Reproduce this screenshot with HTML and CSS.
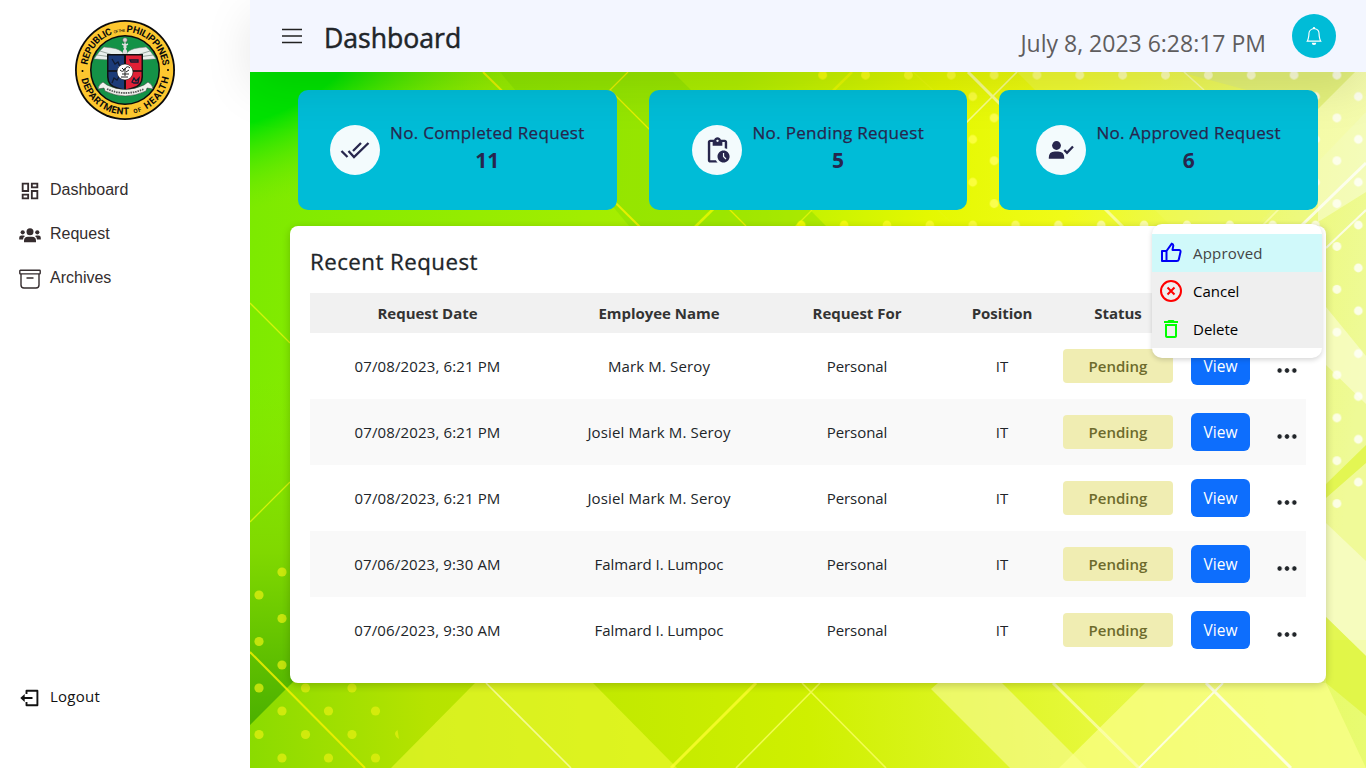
FILE: index.html
```html
<!DOCTYPE html>
<html lang="en">
<head>
<meta charset="utf-8">
<title>Dashboard</title>
<link rel="stylesheet" href="styles.css">
</head>
<body>
<div class="app">
  <aside class="sidebar">
    <svg class="seal" viewBox="0 0 100 100">
      <defs>
        <path id="arcTop" d="M12 50a38 38 0 0 1 76 0"/>
        <path id="arcBottom" d="M5.500 50a44.500 44.500 0 0 0 89 0"/>
      </defs>
      <circle cx="50" cy="50" r="50" fill="#0a0a0a"/>
      <circle cx="50" cy="50" r="48.2" fill="#fdc72f"/>
      <circle cx="50" cy="50" r="35" fill="#0a0a0a"/>
      <circle cx="50" cy="50" r="33.5" fill="#149247"/>
      <g class="seal-text">
        <text><textPath href="#arcTop" startOffset="5" textLength="42">REPUBLIC</textPath></text>
        <text class="seal-small"><textPath href="#arcTop" startOffset="48.5" textLength="11">OF THE</textPath></text>
        <text><textPath href="#arcTop" startOffset="61" textLength="54">PHILIPPINES</textPath></text>
        <text><textPath href="#arcBottom" startOffset="9" textLength="65">DEPARTMENT</textPath></text>
        <text class="seal-small2"><textPath href="#arcBottom" startOffset="79" textLength="8">OF</textPath></text>
        <text><textPath href="#arcBottom" startOffset="92" textLength="40">HEALTH</textPath></text>
      </g>
      <circle cx="7.5" cy="51" r="1"/><circle cx="93" cy="50" r="1"/>
      <path d="M48 33C43 27 33 28 29 27c-4 3-7 8-10 12 6 0 15 2 21-1l8-1zM52 33c5-6 15-5 19-6 4 3 7 8 10 12-6 0-15 2-21-1l-8-1z" fill="#e9efec" stroke="#777" stroke-width=".5"/>
      <path d="M25 31l13 4M22 35l15 2M75 31l-13 4M78 35l-15 2" stroke="#87958d" stroke-width=".8"/>
      <path d="M50 20v16M47 24q6 2 3 5t0 6M53 24q-6 2-3 5t0 6" fill="none" stroke="#ddd" stroke-width="1.5"/>
      <circle cx="50" cy="20" r="2.3" fill="#d6d6d6" stroke="#555" stroke-width=".5"/>
      <path d="M32 34h36v23q0 9-10 12l-8 3-8-3q-10-3-10-12z" fill="#111"/>
      <path d="M33.500 35.500H49v34l-6-2q-9.500-2-9.500-11z" fill="#1c3b78"/>
      <path d="M51 35.500h15.500v21q0 9-9.500 11l-6 2z" fill="#e02036"/>
      <path d="M33 51h34" stroke="#111" stroke-width="1.500"/>
      <path d="M37 39l3 5 3-2 2 5M37 63l2-5 3 2 3-5M55 40h8v2h-7zM57 62l2-4 2 3 3-3-1 5h-4z" fill="none" stroke="#111b32" stroke-width="1.300"/>
      <circle cx="50" cy="52" r="8" fill="#fff" stroke="#111" stroke-width=".6"/>
      <path d="M45 50q3 3 5-1t5-1M47 54h7M50 48v8M46 57h7M47 48l2 2M51 52l3-2" fill="none" stroke="#222"/>
      <path d="M28 62q-5 3-5 7l6-1 1 3q20 10 41 0l1-3 6 1q0-4-5-7l-4 3q-19 9-37 0z" fill="#f0f1ec" stroke="#333" stroke-width=".5"/>
      <path d="M32 69q18 8 37 0" stroke="#555" stroke-width="1.800" stroke-dasharray="1.500 .9" fill="none"/>
    </svg>
    <nav class="nav">
      <a class="nav-item">
        <svg class="nav-icon" viewBox="0 0 24 24"><path fill="#352c2e" d="M19 5v2h-4V5zM9 5v6H5V5zm10 8v6h-4v-6zM9 17v2H5v-2zM21 3h-8v6h8zM11 3H3v10h8zm10 8h-8v10h8zm-10 4H3v6h8z"/></svg>
        <span>Dashboard</span></a>
      <a class="nav-item">
        <svg class="nav-icon" viewBox="0 0 22 22"><g fill="#352c2e"><circle cx="11" cy="7.700" r="3.500"/><circle cx="3.700" cy="8.300" r="2.100"/><circle cx="18.300" cy="8.300" r="2.100"/><path d="M5 18.200v-1.500q0-4 4-4h4q4 0 4 4v1.500zM.2 15.500v-1.700q0-2.300 2.300-2.300h2q1 0 1.500.5-2 1.200-2 3.500zM21.800 15.500v-1.700q0-2.300-2.300-2.300h-2q-1 0-1.500.5 2 1.200 2 3.500z"/></g></svg>
        <span>Request</span></a>
      <a class="nav-item">
        <svg class="nav-icon" viewBox="0 0 22 22"><g fill="none" stroke="#352c2e" stroke-width="1.400"><rect x=".8" y="2.200" width="20.400" height="3.700" rx=".6"/><path d="M2 6v11q0 3 3 3h12q3 0 3-3V6M7.500 10h7"/></g></svg>
        <span>Archives</span></a>
    </nav>
    <a class="nav-item logout">
      <svg class="nav-icon" viewBox="0 0 22 22"><path d="M7.500 7V3.700h10.900v14.600H7.500V15M4 11h9.500" fill="none" stroke="#111" stroke-width="1.900" stroke-linejoin="round"/><path d="M1.300 11l4.400-4v8z" fill="#111"/></svg>
      <span>Logout</span></a>
  </aside>

  <main class="main">
    <header class="topbar">
      <svg class="burger" viewBox="0 0 20 16"><path d="M0 1.500h20M0 8h20M0 14.500h20" stroke="#222" stroke-width="1.300" stroke-linecap="round"/></svg>
      <h1 class="title">Dashboard</h1>
      <time class="clock">July 8, 2023 6:28:17 PM</time>
      <button class="bell"><svg viewBox="0 0 16 16" width="18" height="18"><path fill="#fff" d="M8 16a2 2 0 0 0 2-2H6a2 2 0 0 0 2 2M8 1.918l-.797.161A4 4 0 0 0 4 6c0 .628-.134 2.197-.459 3.742-.16.767-.376 1.566-.663 2.258h10.244c-.287-.692-.502-1.490-.663-2.258C12.134 8.197 12 6.628 12 6a4 4 0 0 0-3.203-3.920zM14.220 12c.223.447.481.801.78 1H1c.299-.199.557-.553.780-1C2.680 10.200 3 6.880 3 6c0-2.420 1.720-4.440 4.005-4.901a1 1 0 1 1 1.990 0A5 5 0 0 1 13 6c0 .880.320 4.200 1.220 6"/></svg></button>
    </header>

    <div class="content">
      <svg class="backdrop" viewBox="250 72 1116 696" preserveAspectRatio="none">
        <defs>
          <linearGradient id="base" gradientUnits="userSpaceOnUse" x1="250" y1="200" x2="1366" y2="330">
            <stop offset="0" stop-color="#7cea00"/><stop offset=".3" stop-color="#a2ed00"/><stop offset=".42" stop-color="#b0ee00"/><stop offset=".6" stop-color="#e4f800"/><stop offset=".72" stop-color="#f0fb18"/><stop offset=".86" stop-color="#ecf864"/><stop offset="1" stop-color="#eefa96"/>
          </linearGradient>
          <radialGradient id="green" gradientUnits="userSpaceOnUse" cx="0" cy="0" r="1" gradientTransform="translate(240 78) rotate(-18) scale(330 130)">
            <stop offset="0" stop-color="#00e200"/><stop offset=".35" stop-color="#00e200"/><stop offset="1" stop-color="#6cea00" stop-opacity="0"/>
          </radialGradient>
          <linearGradient id="dark" x1="0" y1="0" x2="0" y2="1"><stop offset="0" stop-color="#86e200" stop-opacity="0"/><stop offset=".5" stop-color="#80d800"/><stop offset="1" stop-color="#4bb000"/></linearGradient>
          <linearGradient id="floor" gradientUnits="userSpaceOnUse" x1="250" y1="740" x2="1366" y2="680">
            <stop offset="0" stop-color="#8bdb00"/><stop offset=".16" stop-color="#b6e300"/><stop offset=".5" stop-color="#cff000"/><stop offset=".75" stop-color="#e6f83a"/><stop offset="1" stop-color="#e8fb72"/>
          </linearGradient>
          <pattern id="dots" patternUnits="userSpaceOnUse" x="801.300" y="53.700" width="42.850" height="42.850">
            <g fill="#fff"><circle cx="21.400" cy="21.400" r="4.400"/><circle cx="0" cy="0" r="4.400"/><circle cx="42.850" cy="0" r="4.400"/><circle cx="0" cy="42.850" r="4.400"/><circle cx="42.850" cy="42.850" r="4.400"/></g>
          </pattern>
          <linearGradient id="dotTint" gradientUnits="userSpaceOnUse" x1="790" y1="0" x2="1366" y2="0"><stop offset="0" stop-color="#ffff00"/><stop offset=".3" stop-color="#ffff40"/><stop offset=".5" stop-color="#ffffb0"/><stop offset="1" stop-color="#fff"/></linearGradient>
          <mask id="dotMask" maskUnits="userSpaceOnUse" x="790" y="60" width="600" height="450"><rect x="790" y="60" width="600" height="450" fill="url(#dots)"/></mask>
        </defs>
        <path fill="url(#base)" d="M250 72h1116v696H250z"/>
        <path fill="url(#green)" d="M250 72h500v250H250z"/>
        <path fill="#77d800" opacity=".35" d="M500 72h173l154 155H630z"/>
        <path fill="url(#dark)" d="M250 380h60v345h-60z"/>
        <path fill="url(#floor)" d="M250 725l43-43V640h1073v128H250z"/>
        <path fill="#f0fa60" opacity=".4" d="M1017 72h349v40l-110 114h-85z"/>
        <path fill="#d9e985" opacity=".5" d="M1180 72h175l-37 37z"/>
        <path fill="#fff" opacity=".38" d="M1355 72h11v120l-48 30V109z"/>
        <path fill="#fbfdd8" opacity=".6" d="M1326 307l40 49v48l-40-39zM1326 523l40 38v95l-40-39z"/>
        <path fill="#dff43c" opacity=".75" d="M1366 445v18l-40 35v-14zM1326 617l40 39v60l-40-33z"/>
        <path fill="#fafaa0" opacity=".2" d="M1326 498l40-35v98l-40-38z"/>
        <path fill="#f4fb38" opacity=".55" d="M475 683h118l84 85H391z"/>
        <path fill="#f9fc9a" opacity=".6" d="M938 683h64l85 85h-77l-79-79z"/>
        <path fill="#fbff8c" opacity=".7" d="M1145 683h181l40 85h-307z"/>
        <g fill="none" stroke="#fbf200" stroke-width="2" opacity=".8">
          <path d="M483 72l157 155"/><path d="M628 72l-18 18 136 136" stroke-width="1.300"/><path d="M852 72L695 227" stroke="#ecfa00" stroke-width="2.500"/><path d="M812 210l-17 17M913 72l20 18M938 210l17 16M250 303l40 40M250 522l40-40" stroke="#e7f80c" stroke-width="1.300"/>
          <path d="M250 652l115 116"/>
        </g>
        <g fill="none" stroke="#fcfeb5" stroke-width="1.600" opacity=".75">
          <path d="M968 72l156 156" stroke-width="3"/><path d="M1017 72l-57 57M1184 72l20 18M1260 228l20-20"/><path d="M486 683l85 85"/><path d="M756 683l-85 85" stroke="#ffff32" stroke-width="3"/><path d="M820 683l-84 85M802 683l84 85" stroke="#fbff68"/><path d="M1053 683l86 85" stroke-width="3"/><path d="M1223 683l-84 85" stroke="#fff" stroke-width="2"/><path d="M1206 683l85 85" stroke="#fff" stroke-width="3"/><path d="M1366 163l-65 63" stroke="#fff" stroke-width="3"/><path d="M1366 210l-40 38" stroke="#fff" stroke-width="2"/>
        </g>
        <g mask="url(#dotMask)"><rect x="790" y="60" width="600" height="450" fill="url(#dotTint)" opacity=".8"/></g>
        <g fill="#e3ef10" opacity=".75"><circle cx="282" cy="572" r="4.600"/><circle cx="259" cy="595" r="4.600"/><circle cx="282" cy="618.500" r="4.600"/><circle cx="259" cy="641.500" r="4.600"/><circle cx="282" cy="665" r="4.600"/><circle cx="259" cy="688" r="4.600"/><circle cx="305.500" cy="688" r="4.600"/><circle cx="352" cy="688" r="4.600"/><circle cx="282" cy="711" r="4.600"/><circle cx="328.500" cy="711" r="4.600"/><circle cx="375.500" cy="711" r="4.600"/><circle cx="259" cy="734.500" r="4.600"/><circle cx="305.500" cy="734.500" r="4.600"/><circle cx="352" cy="734.500" r="4.600"/><circle cx="282" cy="758" r="4.600"/><circle cx="328.500" cy="758" r="4.600"/><circle cx="375.500" cy="758" r="4.600"/><path d="M397.500 730q-6 4 1.500 9z"/></g>
      </svg>

      <section class="cards">
        <article class="card">
          <span class="card-icon"><svg viewBox="0 0 30 30" width="30" height="30"><path d="M1.500 16l6 6M8.500 16l5.500 6L28.500 8M13 16l8-8" fill="none" stroke="#27264d" stroke-width="2.300"/></svg></span>
          <div class="card-text"><p class="card-label">No. Completed Request</p><p class="card-value">11</p></div>
        </article>
        <article class="card">
          <span class="card-icon"><svg viewBox="0 0 24 24" width="29" height="29"><path fill="#27264d" d="M17 12c-2.760 0-5 2.240-5 5s2.240 5 5 5 5-2.240 5-5-2.240-5-5-5m1.650 7.350L16.500 17.200V14h1v2.790l1.850 1.850zM18 3h-3.180C14.400 1.840 13.300 1 12 1s-2.400.84-2.820 2H6c-1.100 0-2 .9-2 2v15c0 1.100.9 2 2 2h6.110a6.700 6.700 0 0 1-1.420-2H6V5h2v3h8V5h2v5.080c.71.100 1.380.310 2 .600V5c0-1.100-.9-2-2-2m-6 2c-.55 0-1-.45-1-1s.45-1 1-1 1 .45 1 1-.45 1-1 1"/></svg></span>
          <div class="card-text"><p class="card-label label-pending">No. Pending Request</p><p class="card-value">5</p></div>
        </article>
        <article class="card">
          <span class="card-icon"><svg viewBox="0 0 26 26" width="26" height="26"><circle cx="8.500" cy="8.500" r="4.400" fill="#27264d"/><path d="M.8 21.800v-1.300q0-6 6-6h3.400q6 0 6 6v1.300z" fill="#27264d"/><path d="M16.300 13l2.700 2.800L25 9.500" fill="none" stroke="#27264d" stroke-width="2.300"/></svg></span>
          <div class="card-text"><p class="card-label label-approved">No. Approved Request</p><p class="card-value">6</p></div>
        </article>
      </section>

      <section class="panel">
        <h2 class="panel-title">Recent Request</h2>
        <div class="row head"><span>Request Date</span><span>Employee Name</span><span>Request For</span><span>Position</span><span>Status</span></div>
        <div class="row"><span>07/08/2023, 6:21 PM</span><span>Mark M. Seroy</span><span class="tight">Personal</span><span>IT</span><b class="badge">Pending</b><button class="view">View</button><i class="dots"></i></div>
        <div class="row alt"><span>07/08/2023, 6:21 PM</span><span>Josiel Mark M. Seroy</span><span class="tight">Personal</span><span>IT</span><b class="badge">Pending</b><button class="view">View</button><i class="dots"></i></div>
        <div class="row"><span>07/08/2023, 6:21 PM</span><span>Josiel Mark M. Seroy</span><span class="tight">Personal</span><span>IT</span><b class="badge">Pending</b><button class="view">View</button><i class="dots"></i></div>
        <div class="row alt"><span>07/06/2023, 9:30 AM</span><span class="tight">Falmard I. Lumpoc</span><span class="tight">Personal</span><span>IT</span><b class="badge">Pending</b><button class="view">View</button><i class="dots"></i></div>
        <div class="row"><span>07/06/2023, 9:30 AM</span><span class="tight">Falmard I. Lumpoc</span><span class="tight">Personal</span><span>IT</span><b class="badge">Pending</b><button class="view">View</button><i class="dots"></i></div>

        <div class="menu">
          <a class="menu-item active"><svg viewBox="0 0 24 24" width="24" height="24"><path d="M3 10h4.500v10H3zM7.500 10l5.300-7.400q1.500.4 1.500 2L13.500 9H20q1.800.2 1.500 2l-1.700 7.500q-.4 1.500-2 1.500H7.500" fill="none" stroke="#0000f5" stroke-width="2" stroke-linejoin="round"/></svg><span>Approved</span></a>
          <a class="menu-item"><svg viewBox="0 0 24 24" width="24" height="24"><g fill="none" stroke="#f00" stroke-width="2"><circle cx="12" cy="12" r="10"/><path d="M8.500 8.500l7 7M15.500 8.500l-7 7"/></g></svg><span>Cancel</span></a>
          <a class="menu-item"><svg viewBox="0 0 24 24" width="24" height="24"><path fill="#0f0" d="M6 19c0 1.100.9 2 2 2h8c1.100 0 2-.9 2-2V7H6zM8 9h8v10H8zm7.500-5l-1-1h-5l-1 1H5v2h14V4z"/></svg><span>Delete</span></a>
        </div>
      </section>
    </div>
  </main>
</div>
</body>
</html>
```

FILE: styles.css
```css
* { box-sizing: border-box; }
body { margin: 0; font-family: "Open Sans", "Noto Sans", sans-serif; font-size: 15px; color: #212529; overflow: hidden; }
h1, h2, p { margin: 0; font-weight: 400; }
button { border: 0; font-family: inherit; }
.app { display: flex; height: 768px; width: 1366px; }
.sidebar { width: 250px; flex: none; background: #fff; display: flex; flex-direction: column; padding-top: 20px; }
.seal { width: 100px; height: 100px; align-self: center; flex: none; }
.seal-text { font: 700 9.6px Roboto, sans-serif; fill: #0a0a0a; }
.seal-small { font-size: 4px; font-weight: 400; }
.seal-small2 { font-size: 6px; }
.nav { padding-top: 47px; }
.nav-item { display: flex; align-items: center; gap: 9px; height: 44px; padding-left: 19px; font: 16px "Liberation Sans", Arial, sans-serif; color: #332d2e; }
.nav-item span { padding-top: 2px; }
.nav-icon { width: 22px; height: 22px; margin-top: 4px; }
.logout { margin-top: auto; margin-bottom: 50px; font: 15px "Open Sans", sans-serif; letter-spacing: .25px; color: #111; }
.logout span { padding-top: 0; }
.main { flex: 1; display: flex; flex-direction: column; min-width: 0; }
.topbar { height: 72px; flex: none; display: flex; background: #f3f6ff; padding: 14px 30px 0 32px; box-shadow: 0 16px 48px rgba(0,0,0,.1); position: relative; z-index: 2; }
.burger { width: 20px; height: 16px; margin-top: 14px; }
.title { margin-left: 22px; margin-top: 2px; font-size: 26.6px; line-height: 44px; color: #212529; -webkit-text-stroke: .5px #212529; }
.clock { margin-left: auto; margin-top: 7px; font-size: 23px; line-height: 44px; color: #5f5d5e; }
.bell { width: 44px; height: 44px; border-radius: 50%; margin-left: 26px; padding: 0; background: #00bcd7; display: flex; align-items: center; justify-content: center; }
.content { flex: 1; position: relative; z-index: 1; padding: 18px 40px 0; }
.backdrop { position: absolute; left: 0; top: 0; width: 100%; height: 100%; z-index: -1; }
.cards { display: grid; grid-template-columns: repeat(3, 1fr); gap: 32px; padding: 0 8px; }
.card { height: 120px; border-radius: 10px; background: #00bcd7; display: flex; justify-content: center; align-items: center; gap: 10px; color: #27264d; }
.card-icon { width: 50px; height: 50px; border-radius: 50%; background: #f3fbfd; display: flex; align-items: center; justify-content: center; }
.card-text { text-align: center; margin-top: -6px; }
.card-label { font-size: 17px; line-height: 26px; width: 195px; white-space: nowrap; letter-spacing: .32px; -webkit-text-stroke: .25px #27264d; }
.label-pending { width: 171px; }
.label-approved { width: 185px; }
.card-value { font-size: 21px; line-height: 28px; font-weight: 700; }
.panel { position: relative; margin-top: 16px; height: 457px; padding: 16px 20px 20px; border-radius: 8px; background: #fff; box-shadow: 0 2px 9px rgba(0,0,0,.2); }
.panel-title { font-size: 22.3px; line-height: 40px; height: 51px; letter-spacing: .45px; -webkit-text-stroke: .3px #212529; }
.row { display: grid; grid-template-columns: 235px 228px 168px 122px 110px 95px 38px; height: 66px; align-items: center; justify-items: center; letter-spacing: .13px; white-space: nowrap; }
.head { height: 40px; background: #f1f1f1; font-weight: 700; color: #333; letter-spacing: -.03px; }
.tight { letter-spacing: -.05px; }
.alt { background: #f9f9f9; }
.badge { width: 110px; height: 34px; border-radius: 4px; background: #f0edb2; color: #6d6b2c; font-weight: 600; text-align: center; line-height: 34px; letter-spacing: 0; }
.view { width: 59px; height: 38px; border-radius: 6px; background: #0d6efd; color: #fff; font-size: 15.5px; padding: 0; }
.dots { width: 20px; height: 5px; margin-top: 9px; background: radial-gradient(circle, #212529 1.9px, transparent 2.6px) 50% / 7.4px 5px; }
.menu { position: absolute; left: 862px; top: -2px; width: 170px; padding: 10px 0; border-radius: 10px; background: #fff; box-shadow: 0 2px 5px rgba(0,0,0,.16); overflow: hidden; }
.menu-item { display: flex; align-items: center; gap: 10px; height: 38px; padding-left: 7px; background: #efefef; color: #000; }
.active { background: #d0f9fa; color: #444; letter-spacing: .2px; }
```
